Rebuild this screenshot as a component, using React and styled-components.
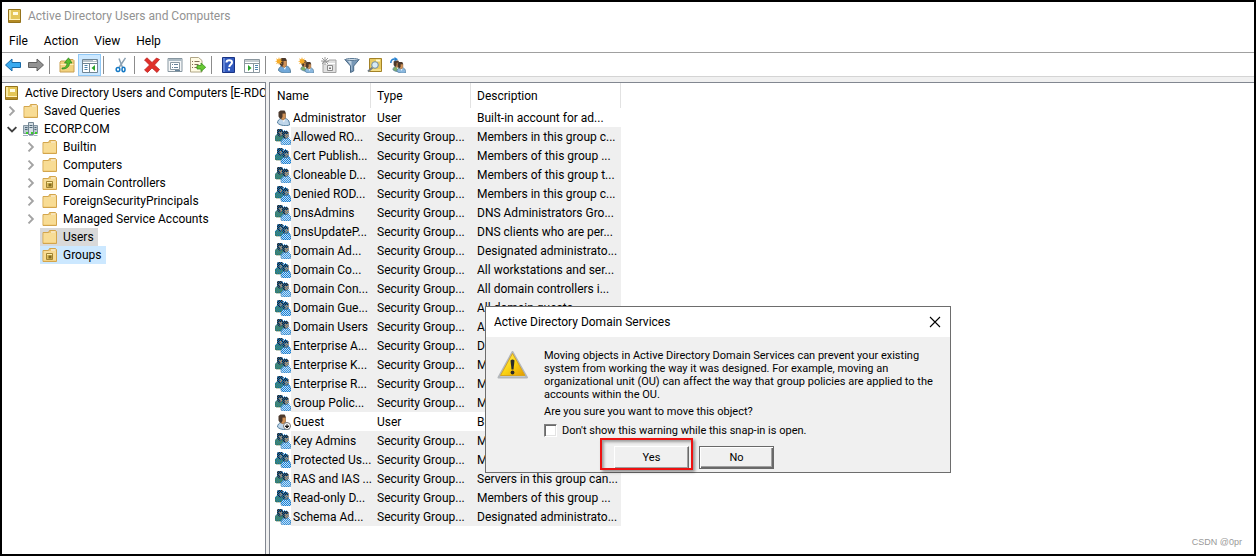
import { useState } from "react";
import styled, { createGlobalStyle } from "styled-components";

const GlobalStyle = createGlobalStyle`
  * {
    box-sizing: border-box;
  }

  body {
    margin: 0;
    background: #fff;
    color: #000;
    font-family: Roboto, "Liberation Sans", sans-serif;
    font-size: 12px;
  }

  button {
    font: inherit;
    color: inherit;
    border: 0;
    padding: 0;
    background: none;
  }
`;

const Window = styled.div`
  position: relative;
  display: flex;
  flex-direction: column;
  min-height: 100vh;
  border: 2px solid #000;
  background: #f0f0f0;
`;

const TitleBar = styled.header`
  display: flex;
  align-items: center;
  gap: 5px;
  height: 27px;
  padding-left: 5px;
  background: #fff;
  color: #929292;
`;

const MenuBar = styled.nav`
  display: flex;
  align-items: center;
  gap: 16px;
  height: 24px;
  padding-left: 7px;
  background: #fff;
  border-bottom: 1px solid #a0a0a0;
`;

const Toolbar = styled.div`
  padding-top: 1px;
  background: #fff;
  border-bottom: 1px solid #d4d4d4;
`;

const ToolGroup = styled.div`
  display: flex;
  align-items: center;
  margin-left: -1px;
`;

const ToolButton = styled.button`
  display: flex;
  align-items: center;
  justify-content: center;
  width: 23px;
  height: 22px;
  border: 1px solid ${(props) => (props.$active ? "#90c8f6" : "transparent")};
  background: ${(props) => (props.$active ? "#cce8ff" : "transparent")};
`;

const Separator = styled.span`
  width: 1px;
  height: 18px;
  margin: 0 5px 0 2px;
  background: #8c8c8c;
`;

const Panes = styled.main`
  flex: 1;
  display: flex;
  gap: 3px;
  padding-top: 5px;
`;

const TreePane = styled.aside`
  width: 264px;
  flex-shrink: 0;
  overflow: hidden;
  background: #fff;
  border-top: 1px solid #828790;
  border-right: 1px solid #828790;
`;

const TreeList = styled.ul`
  list-style: none;
  margin: 0;
  padding: 1px 0 0;
`;

const TreeRow = styled.li`
  display: flex;
  height: 18px;
  padding-left: ${(props) => (props.$level > 1 ? 20 : props.$level)}px;
`;

const Toggle = styled.button`
  display: flex;
  align-items: center;
  justify-content: center;
  flex-shrink: 0;
  width: 18px;
`;

const TreeLabel = styled.button`
  display: flex;
  align-items: center;
  gap: 5px;
  padding: 0 4px 0 2px;
  white-space: nowrap;
  background: ${(props) => props.$color || "transparent"};

  svg {
    flex-shrink: 0;
  }
`;

const ListPane = styled.section`
  flex: 1;
  min-width: 0;
  background: #fff;
  border-top: 1px solid #828790;
  border-left: 1px solid #828790;
`;

const Table = styled.table`
  width: 351px;
  table-layout: fixed;
  border-collapse: separate;
  border-spacing: 0;
`;

const HeadCell = styled.th`
  width: ${(props) => props.$width}px;
  height: 25px;
  padding: 0 0 0 6px;
  text-align: left;
  font-weight: 400;
  border-left: 1px solid #e2e2e2;

  &:first-child {
    border-left-color: transparent;
  }

  &:last-child {
    border-right: 1px solid #e2e2e2;
  }
`;

const Cell = styled.td`
  height: 19px;
  padding: 1px 0 0 7px;
  line-height: 18px;
  white-space: nowrap;
  background: ${(props) => (props.$shaded ? "#efefef" : "#fff")};
`;

const NameCell = styled(Cell)`
  padding: 0;
  background: #fff;
`;

const NameContent = styled.div`
  display: flex;
  padding-left: 5px;
  align-items: center;

  svg {
    flex-shrink: 0;
  }
`;

const NameText = styled.span`
  flex: 1;
  padding: 1px 0 0 2px;
  line-height: 18px;
  background: ${(props) => (props.$shaded ? "#efefef" : "#fff")};
`;

const Dialog = styled.section`
  position: absolute;
  left: 483px;
  top: 304px;
  width: 466px;
  border: 1px solid #6d6d6d;
  background: #f0f0f0;
`;

const DialogTitle = styled.header`
  display: flex;
  align-items: center;
  justify-content: space-between;
  height: 30px;
  padding: 0 9px 0 8px;
  background: #fff;
`;

const CloseButton = styled.button`
  display: flex;
  padding: 0;
`;

const DialogBody = styled.div`
  display: flex;
  gap: 15px;
  padding: 12px 8px 0 11px;
  font-size: 11px;
  line-height: 13px;

  svg {
    flex-shrink: 0;
  }
`;

const Message = styled.div`
  p {
    margin: 0 0 4px;
  }
`;

const CheckLabel = styled.label`
  display: flex;
  align-items: center;
  gap: 5px;
  margin-top: 6px;
`;

const CheckBox = styled.input`
  appearance: none;
  width: 13px;
  height: 13px;
  margin: 0;
  background: #fff;
  border: 1px solid;
  border-color: #808080 #fff #fff #808080;
  box-shadow: inset 1px 1px #696969, inset -1px -1px #e3e3e3;
`;

const DialogActions = styled.div`
  display: flex;
  gap: 10px;
  padding: 9px 0 3px 128px;
  font-size: 11px;
`;

const ButtonSlot = styled.div`
  position: relative;
`;

const DialogButton = styled.button`
  width: 75px;
  height: 23px;
  background: #f0f0f0;
  border: 1px solid;
  border-color: ${(props) =>
    props.$framed ? "#696969" : "#fff #696969 #696969 #fff"};
  box-shadow: ${(props) =>
    props.$framed
      ? "inset 1px 1px #fff, inset -1px -1px #696969, inset -2px -2px #a0a0a0"
      : "inset -1px -1px #a0a0a0"};
`;

const Highlight = styled.span`
  position: absolute;
  left: -14px;
  top: -8px;
  width: 93px;
  height: 32px;
  border: 2px solid #ed1111;
  box-shadow: 2px 2px 3px rgba(0, 0, 0, 0.4), inset 2px 2px 3px rgba(0, 0, 0, 0.35);
  pointer-events: none;
`;

const Watermark = styled.small`
  position: absolute;
  right: 12px;
  bottom: 6px;
  font-family: "Liberation Sans", sans-serif;
  font-size: 9px;
  line-height: 12px;
  color: #999;
`;

const Svg = ({ children, size = 16 }) => (
  <svg width={size} height={size} viewBox="0 0 16 16" fill="none" aria-hidden="true">
    {children}
  </svg>
);

const BookIcon = () => (
  <Svg>
    <path d="M1.500 1.500h12v13h-12z" fill="#e0bd4c" stroke="#94731c" />
    <path d="M2 2h2v9.500H2z" fill="#f8e9a0" />
    <path d="M4 2h9v9.500H4z" fill="#e4c658" />
    <path d="M6 4h5v3H6z" fill="#fffbe2" />
    <path d="M2 12h11v2H2z" fill="#b38a24" />
    <path d="M2 11.500h11" stroke="#fff3bd" />
  </Svg>
);

const FolderIcon = ({ unit }) => (
  <Svg>
    <path d="M1 14.500v-11h5.500l1-2h6l1 1v12z" fill="#efc871" stroke="#d3a54c" />
    <path d="M9 3h4.500" stroke="#fff" />
    <path d="M1.500 5h12.500" stroke="#fff0bd" />
    <path d="M1.500 6h12.500v7.500H1.500z" fill="#f8dc94" />
    {unit && (
      <>
        <path d="M4.500 6.500h6v6h-6z" fill="#dcbc5a" stroke="#a08433" />
        <path d="M6.500 8.500h3v3h-3z" fill="#80681f" />
        <path d="M5 7.500h5" stroke="#fff0ab" />
      </>
    )}
  </Svg>
);

const DomainIcon = () => (
  <Svg>
    <path d="M.5 4.500h5v8h-5zM10.500 4.500h4v8h-4z" fill="#bcc9d2" stroke="#8496a3" />
    <path d="M5.500 1.500h5v12h-5z" fill="#d4dee4" stroke="#748794" />
    <path d="M6.500 4.500h3M6.500 6.500h3M2 6.500h2.500M2 8.500h2.500M11.500 6.500h2M11.500 8.500h2" stroke="#516878" />
    <path d="M8 11h2v2H8zM3 11h2v2H3zM12 11h2v2h-2z" fill="#38d028" />
    <path d="M0 14.500h5M6 14.500h4M10.500 14.500h4" stroke="#9fb0bc" />
  </Svg>
);

const Chevron = ({ open }) => (
  <Svg size={10}>
    <path
      d={open ? "M1 5l7 7 7-7" : "M4 1l7 7-7 7"}
      stroke={open ? "#404040" : "#a3a3a3"}
      strokeWidth="3"
    />
  </Svg>
);

const Person = ({ x = 0, y = 0, scale = 1, body = "#a9cbea" }) => (
  <g transform={`translate(${x} ${y}) scale(${scale})`}>
    <path d="M2.500 13c0-2 1.500-4.500 4-4.500h3c3 0 5 2 5 6.500-3 1-9 1-12-2z" fill={body} stroke="#57809f" />
    <path d="M7 9l2 3.500 1-3.500z" fill="#fff" />
    <path d="M5.500 3h5v5l-2 2-2.500-1z" fill="#cf9157" stroke="#885829" strokeWidth=".6" />
    <path d="M3.500 6.500V2l2-1.500h4l1 1.500v1.500H7.500V7l-1.500 2-1.500-1z" fill="#4c392c" />
  </g>
);

const UserIcon = ({ disabled }) => (
  <Svg>
    <Person body="#bfd6ea" />
    {disabled && (
      <>
        <circle cx="12" cy="12" r="3.500" fill="#fff" stroke="#777" />
        <path d="M12 10v3M10 12l2 2 2-2z" fill="#111" stroke="#111" strokeWidth=".8" />
      </>
    )}
  </Svg>
);

const groupShape =
  "M0 11V7l2-2V1l1-1h4l1 1h3l2 2v4l2 2 1 3v3l-1 1H8l-2-2v-2H1z";

// The halftone is tied to the screen grid, so it flips between odd and even rows.
const GroupIcon = ({ odd }) => {
  const id = odd ? "tone-odd" : "tone-even";
  return (
    <Svg>
      <defs>
        <pattern id={id} width="2" height="2" patternUnits="userSpaceOnUse">
          <path
            d={odd ? "M0 0h1v1H0zM1 1h1v1H1z" : "M1 0h1v1H1zM0 1h1v1H0z"}
            fill="#0078d7"
            shapeRendering="crispEdges"
          />
        </pattern>
      </defs>
      <path d="M0 11V8l2-2.500h5L9 8v4H1z" fill="#5c8a45" stroke="#2f5a2c" strokeWidth=".6" />
      <path d="M2 1l1-1h4l1 1.500V5L6 7.500H4L2 5z" fill="#33261d" />
      <path d="M4 3h3v3L5.500 7z" fill="#d6924f" />
      <path d="M6 15v-3l2.500-3H13l2.500 2.500V15l-1 1H7z" fill="#c4def5" stroke="#4d81ad" strokeWidth=".6" />
      <path d="M7.500 4l1.500-2h3l1.500 1.500V8L12 9.500H9L7.500 7.500z" fill="#33261d" />
      <path d="M9.500 5H13v3l-1.500 1.500-1.500-1z" fill="#d6924f" />
      <path d={groupShape} fill={`url(#${id})`} opacity={odd ? 0.7 : 0.9} />
    </Svg>
  );
};

const Spark = () => (
  <path
    d="M4 0l.8 2.400L7 1.200 5.800 3.500 8 4.200l-2.200.8L7 7.200 4.800 6 4 8l-.8-2L1 7.200l1.200-2.200L0 4.200l2.200-.7L1 1.200l2.200 1.200z"
    fill="#f6aa25"
  />
);

const tools = [
  {
    label: "Back",
    icon: (
      <path d="M.5 8l6.500-6v3.500h8.500v5H7V14z" fill="#38aaf0" stroke="#1769a6" />
    ),
  },
  {
    label: "Forward",
    icon: (
      <path d="M15.500 8L9 2v3.500H.5v5H9V14z" fill="#929292" stroke="#606060" />
    ),
  },
  null,
  {
    label: "Up One Level",
    icon: (
      <>
        <path d="M1 15V5l1-1h5l1-1.500h6l1 1V15z" fill="#f2d27e" stroke="#c9a052" />
        <path d="M1.500 7.500h13" stroke="#fff0bc" />
        <path d="M3 11c3.500 0 5-2 5-5H5.500L9.500.8 13 6h-2.500c0 4-3 6-7.500 6z" fill="#58bd2d" stroke="#26851c" strokeWidth=".7" />
      </>
    ),
  },
  {
    label: "Console Tree",
    active: true,
    icon: (
      <>
        <path d="M.5 2.500h15v13H.5z" fill="#fff" stroke="#708594" />
        <path d="M1 4h14M1 6.500h14M7.500 7v8" stroke="#708594" />
        <path d="M2.500 8.500h3M2.500 10.500h3M2.500 12.500h3" stroke="#4c83ae" />
        <path d="M13 8v6l-3.500-3z" fill="#28a428" />
        <path d="M11 3.500h3" stroke="#fff" />
      </>
    ),
  },
  null,
  {
    label: "Cut",
    icon: (
      <>
        <path d="M6 1.500l3.500 9M12.500.8L6 10.500" stroke="#8ba1b2" strokeWidth="1.500" />
        <ellipse cx="5" cy="12.500" rx="1.800" ry="2" stroke="#1579c5" strokeWidth="1.500" />
        <ellipse cx="10.500" cy="12.500" rx="1.500" ry="2.200" stroke="#1579c5" strokeWidth="1.500" />
      </>
    ),
  },
  null,
  {
    label: "Delete",
    icon: (
      <path
        d="M.5 3L3 .8 8 5.500 12.500 1l3 1.500L10.500 8l5 4.500-2.500 3-5-4.500-4.500 4.500-3-2.500 5-5z"
        fill="#e02f29"
        stroke="#b71d1b"
        strokeWidth=".7"
      />
    ),
  },
  {
    label: "Properties",
    icon: (
      <>
        <path d="M1 1.500h14v13H1z" fill="#f4f6f7" stroke="#8796a0" />
        <path d="M1.500 3h13" stroke="#abbac3" strokeWidth="2" />
        <path d="M3.500 5.500h9v7h-9z" fill="#fff" stroke="#8a99a3" />
        <path d="M5 7.500h1M7 7.500h4M5 10.500h1M7 10.500h4M8 13.500h5" stroke="#67839a" />
      </>
    ),
  },
  {
    label: "Export List",
    icon: (
      <>
        <path d="M.5.500h8l3.500 3v11.500H.5z" fill="#fffbe4" stroke="#b0a687" />
        <path d="M2 4.500h1M4.500 4.500h5M2 7.500h1M4.500 7.500h4M2 10.500h1M4.500 10.500h3" stroke="#806f54" />
        <path d="M7 8.500h4V6l4.700 4.300-4.700 4.200V12H7z" fill="#68c934" stroke="#3a931d" strokeWidth=".8" />
      </>
    ),
  },
  null,
  {
    label: "Help",
    icon: (
      <>
        <path d="M1.500.5h12v15h-12z" fill="#3159bd" stroke="#193384" />
        <path d="M2 1h2v14H2z" fill="#6184d6" />
        <path d="M5.500 5.500c0-3 5.500-3 5.500 0 0 2-2.700 2-2.700 4.500" stroke="#fff" strokeWidth="2" />
        <path d="M7 11.500h2v2H7z" fill="#fff" />
      </>
    ),
  },
  {
    label: "Action Pane",
    icon: (
      <>
        <path d="M.5 2.500h15v13H.5z" fill="#fff" stroke="#8b979f" />
        <path d="M1 4h14M1 6.500h14M9.500 7v8" stroke="#8b989f" />
        <path d="M4 8v6l3.500-3z" fill="#28a428" />
        <path d="M11 8.500h3M11 10.500h3M11 12.500h3" stroke="#4c83ae" />
      </>
    ),
  },
  null,
  {
    label: "New User",
    icon: (
      <>
        <Person x={1} y={0.5} body="#70a7d8" />
        <Spark />
      </>
    ),
  },
  {
    label: "New Group",
    icon: (
      <>
        <Person x={1} y={3} scale={0.72} body="#7fae67" />
        <Person x={5} y={4.5} scale={0.75} body="#8ab8df" />
        <Spark />
      </>
    ),
  },
  {
    label: "New Organizational Unit",
    icon: (
      <>
        <path d="M2 15.500v-11h5l1-1.500h7v12.500z" fill="#e0e0e0" stroke="#a3a3a3" />
        <path d="M3 6.500h11" stroke="#fff" />
        <path d="M6.500 8.500h5v5h-5z" fill="#f4f4f4" stroke="#8a8a8a" />
        <path d="M8 10.500h2v1.500H8z" fill="#777" />
        <path d="M4 0v8M0 4h8M1 1l6 6M7 1L1 7" stroke="#9a9a9a" />
      </>
    ),
  },
  {
    label: "Filter",
    icon: (
      <>
        <path d="M.8 2.500h14.400L9.700 9v5l-3.200 1.500V9z" fill="#7898b6" stroke="#4b6a87" />
        <path d="M3.500 3.500h4V13h-.5V8.500z" fill="#bfd2e2" />
        <ellipse cx="8" cy="2.500" rx="6.500" ry="1" fill="#d3e1ec" stroke="#5c7a95" />
      </>
    ),
  },
  {
    label: "Find",
    icon: (
      <>
        <path d="M2.500 1.500h12v13h-12z" fill="#e8cb61" stroke="#a38227" />
        <path d="M9 3.500h4" stroke="#fff8cf" strokeWidth="2" />
        <path d="M3 13h11" stroke="#fff1ae" />
        <path d="M5.500 10.500l-4.500 4" stroke="#737c82" strokeWidth="2" />
        <circle cx="8" cy="8" r="3.300" fill="#d7ebf7" stroke="#738b9b" />
      </>
    ),
  },
  {
    label: "Add to Group",
    icon: (
      <>
        <Person x={1} y={3} scale={0.75} body="#7fae67" />
        <Person x={5} y={4.5} scale={0.75} body="#8ab8df" />
        <path d="M.8 6c0-3 1.500-4 4-4" stroke="#2680cf" strokeWidth="1.500" />
        <path d="M4.500 0L8 2.200 4.500 4.500z" fill="#2680cf" />
      </>
    ),
  },
];

const tree = [
  { name: "Active Directory Users and Computers [E-RDC", level: 0, icon: <BookIcon /> },
  { name: "Saved Queries", level: 1, toggle: true, icon: <FolderIcon /> },
  { name: "ECORP.COM", level: 1, toggle: true, open: true, icon: <DomainIcon /> },
  { name: "Builtin", level: 2, toggle: true, icon: <FolderIcon /> },
  { name: "Computers", level: 2, toggle: true, icon: <FolderIcon /> },
  { name: "Domain Controllers", level: 2, toggle: true, icon: <FolderIcon unit /> },
  { name: "ForeignSecurityPrincipals", level: 2, toggle: true, icon: <FolderIcon /> },
  { name: "Managed Service Accounts", level: 2, toggle: true, icon: <FolderIcon /> },
  { name: "Users", level: 2, color: "#d9d9d9", icon: <FolderIcon /> },
  { name: "Groups", level: 2, color: "#cce8ff", icon: <FolderIcon unit /> },
];

const objects = [
  ["Administrator", "User", "Built-in account for ad..."],
  ["Allowed RO...", "Security Group...", "Members in this group c..."],
  ["Cert Publish...", "Security Group...", "Members of this group ..."],
  ["Cloneable D...", "Security Group...", "Members of this group t..."],
  ["Denied ROD...", "Security Group...", "Members in this group c..."],
  ["DnsAdmins", "Security Group...", "DNS Administrators Gro..."],
  ["DnsUpdateP...", "Security Group...", "DNS clients who are per..."],
  ["Domain Ad...", "Security Group...", "Designated administrato..."],
  ["Domain Co...", "Security Group...", "All workstations and ser..."],
  ["Domain Con...", "Security Group...", "All domain controllers i..."],
  ["Domain Gue...", "Security Group...", "All domain guests"],
  ["Domain Users", "Security Group...", "All domain users"],
  ["Enterprise A...", "Security Group...", "Designated administrato..."],
  ["Enterprise K...", "Security Group...", "Members of this group ..."],
  ["Enterprise R...", "Security Group...", "Members of this group ..."],
  ["Group Polic...", "Security Group...", "Members in this group c..."],
  ["Guest", "User", "Built-in account for gue..."],
  ["Key Admins", "Security Group...", "Members of this group ..."],
  ["Protected Us...", "Security Group...", "Members of this group ..."],
  ["RAS and IAS ...", "Security Group...", "Servers in this group can..."],
  ["Read-only D...", "Security Group...", "Members of this group ..."],
  ["Schema Ad...", "Security Group...", "Designated administrato..."],
];

const ObjectRow = ({ object, index }) => {
  const [name, type, description] = object;
  const isGroup = type !== "User";
  return (
    <tr>
      <NameCell>
        <NameContent>
          {isGroup ? (
            <GroupIcon odd={index % 2 === 1} />
          ) : (
            <UserIcon disabled={name === "Guest"} />
          )}
          <NameText $shaded={isGroup}>{name}</NameText>
        </NameContent>
      </NameCell>
      <Cell $shaded={isGroup}>{type}</Cell>
      <Cell $shaded={isGroup}>{description}</Cell>
    </tr>
  );
};

const WarningIcon = () => (
  <svg width="32" height="32" viewBox="0 0 32 32" aria-hidden="true">
    <defs>
      <linearGradient id="warn" x1="0" y1="0" x2="1" y2="1">
        <stop offset="0" stopColor="#fff27a" />
        <stop offset=".5" stopColor="#fbd514" />
        <stop offset="1" stopColor="#e39a00" />
      </linearGradient>
    </defs>
    <path d="M15.500 3L30 28.500H1.500z" fill="#d5d8db" stroke="#b3b7bb" strokeWidth="2" strokeLinejoin="round" />
    <path d="M15.500 4.500L28 26.500H3.500z" fill="url(#warn)" stroke="#d9a51a" strokeLinejoin="round" />
    <path d="M13.500 11.500q2-2 4 0l-1 9h-2z" fill="#2b2b2b" />
    <circle cx="15.500" cy="23.500" r="1.900" fill="#2b2b2b" />
  </svg>
);

const WarningDialog = () => {
  const [hideWarning, setHideWarning] = useState(false);

  return (
    <Dialog role="dialog" aria-labelledby="dialog-title">
      <DialogTitle>
        <span id="dialog-title">Active Directory Domain Services</span>
        <CloseButton aria-label="Close">
          <svg width="12" height="12" viewBox="0 0 12 12" aria-hidden="true">
            <path d="M1 1l10 10M11 1L1 11" stroke="#000" strokeWidth="1.100" />
          </svg>
        </CloseButton>
      </DialogTitle>
      <DialogBody>
        <WarningIcon />
        <Message>
          <p>
            Moving objects in Active Directory Domain Services can prevent your existing
            <br />
            system from working the way it was designed. For example, moving an
            <br />
            organizational unit (OU) can affect the way that group policies are applied to the
            <br />
            accounts within the OU.
          </p>
          <p>Are you sure you want to move this object?</p>
          <CheckLabel>
            <CheckBox
              type="checkbox"
              checked={hideWarning}
              onChange={(e) => setHideWarning(e.target.checked)}
            />
            Don't show this warning while this snap-in is open.
          </CheckLabel>
        </Message>
      </DialogBody>
      <DialogActions>
        <ButtonSlot>
          <DialogButton>Yes</DialogButton>
          <Highlight />
        </ButtonSlot>
        <DialogButton $framed>No</DialogButton>
      </DialogActions>
    </Dialog>
  );
};

const App = () => {
  return (
    <>
      <GlobalStyle />
      <Window>
        <TitleBar>
          <BookIcon />
          <span>Active Directory Users and Computers</span>
        </TitleBar>
        <MenuBar>
          {["File", "Action", "View", "Help"].map((item) => (
            <button key={item}>{item}</button>
          ))}
        </MenuBar>
        <Toolbar>
          <ToolGroup>
            {tools.map((tool, i) =>
              tool ? (
                <ToolButton key={i} aria-label={tool.label} $active={tool.active}>
                  <Svg>{tool.icon}</Svg>
                </ToolButton>
              ) : (
                <Separator key={i} />
              )
            )}
          </ToolGroup>
        </Toolbar>
        <Panes>
          <TreePane>
            <TreeList>
              {tree.map((node) => (
                <TreeRow key={node.name} $level={node.level}>
                  {node.level > 0 && (
                    <Toggle aria-label={`Toggle ${node.name}`} disabled={!node.toggle}>
                      {node.toggle && <Chevron open={node.open} />}
                    </Toggle>
                  )}
                  <TreeLabel $color={node.color}>
                    {node.icon}
                    {node.name}
                  </TreeLabel>
                </TreeRow>
              ))}
            </TreeList>
          </TreePane>
          <ListPane>
            <Table>
              <thead>
                <tr>
                  <HeadCell $width={100}>Name</HeadCell>
                  <HeadCell $width={100}>Type</HeadCell>
                  <HeadCell $width={151}>Description</HeadCell>
                </tr>
              </thead>
              <tbody>
                {objects.map((object, i) => (
                  <ObjectRow key={object[0]} object={object} index={i} />
                ))}
              </tbody>
            </Table>
          </ListPane>
        </Panes>
        <WarningDialog />
        <Watermark>CSDN @0pr</Watermark>
      </Window>
    </>
  );
};

export default App;
